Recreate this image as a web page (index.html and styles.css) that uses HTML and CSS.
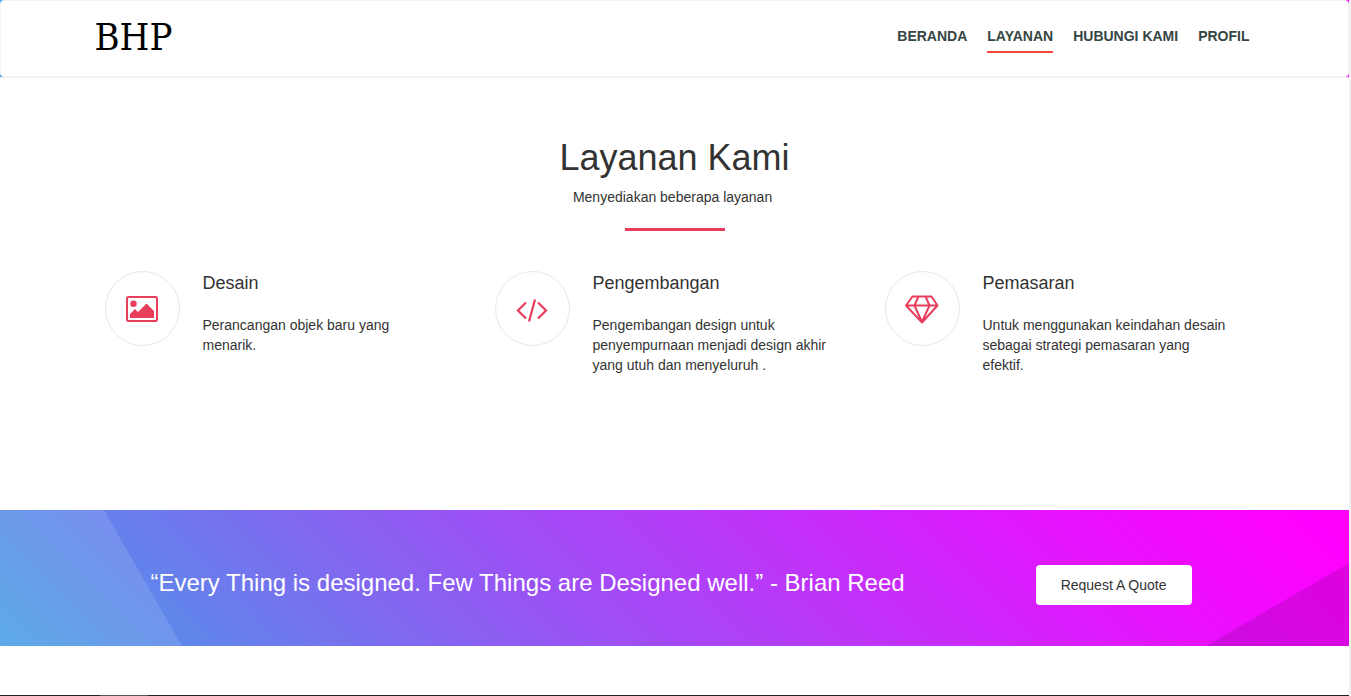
FILE: index.html
```html
<!DOCTYPE html>
<html lang="id">
<head>
<meta charset="utf-8">
<title>BHP - Layanan</title>
<link rel="stylesheet" href="styles.css">
</head>
<body>
<div class="header-wrap">
  <header class="header">
    <div class="container header-row">
      <a class="logo" href="#">BHP</a>
      <nav class="nav">
        <a href="#">BERANDA</a>
        <a class="active" href="#">LAYANAN</a>
        <a href="#">HUBUNGI KAMI</a>
        <a href="#">PROFIL</a>
      </nav>
    </div>
  </header>
</div>
<main>
  <section class="services">
    <div class="section-title">
      <h1>Layanan Kami</h1>
      <p>Menyediakan beberapa layanan&nbsp;</p>
      <hr>
    </div>
    <div class="container service-grid">
      <article class="service">
        <span class="circle">
          <svg width="34" height="28" viewBox="0 0 34 28" aria-hidden="true"><rect x="2" y="2" width="30" height="24" rx="1.5" fill="none" stroke="currentColor" stroke-width="2"/><circle cx="8.5" cy="8.8" r="3.2" fill="currentColor"/><path fill="currentColor" d="M5 23v-4l5-5 3 3 8.500-8.500 7.500 7.500v7z"/></svg>
        </span>
        <div>
          <h2>Desain</h2>
          <p>Perancangan objek baru yang menarik.</p>
        </div>
      </article>
      <article class="service">
        <span class="circle">
          <svg width="34" height="28" viewBox="0 0 34 28" aria-hidden="true"><path fill="none" stroke="currentColor" stroke-width="2.200" d="M11 7.500 3 15.500l8 8M23 7.500l8 8-8 8M20 4.500l-6 22"/></svg>
        </span>
        <div>
          <h2>Pengembangan</h2>
          <p>Pengembangan design untuk penyempurnaan menjadi design akhir yang utuh dan menyeluruh .</p>
        </div>
      </article>
      <article class="service">
        <span class="circle">
          <svg width="36" height="30" viewBox="0 0 36 30" aria-hidden="true"><path fill="none" stroke="currentColor" stroke-width="2" stroke-linejoin="round" d="M8.500 2.500h19l6 9L18 28.500 2 11.500zM2 11.500h31.500M14.500 2.500l-4 9L18 28l7.500-16.500-4-9"/></svg>
        </span>
        <div>
          <h2>Pemasaran</h2>
          <p>Untuk menggunakan keindahan desain sebagai strategi pemasaran yang efektif.</p>
        </div>
      </article>
    </div>
  </section>
  <section class="quote">
    <svg class="facets" viewBox="0 0 1349 136" preserveAspectRatio="none" aria-hidden="true"><path fill="#fff" fill-opacity=".12" d="M0 0h104l78 136H0z"/><path fill-opacity=".12" d="M1349 53v83h-143z"/></svg>
    <div class="container quote-row">
      <p>“Every Thing is designed. Few Things are Designed well.” - Brian Reed</p>
      <button type="button">Request A Quote</button>
    </div>
  </section>
</main>
<footer class="footer"></footer>
</body>
</html>
```
FILE: styles.css
```css
* { box-sizing: border-box; }
html { background: #f1f1f1; }
body {
  margin: 0 2px 0 0;
  min-height: 100vh;
  display: flex;
  flex-direction: column;
  background: #fff;
  color: #333;
  font: 14px/20px "Liberation Sans", Arial, sans-serif;
}
h1, h2, p { margin: 0; font-weight: 400; }
a { color: inherit; text-decoration: none; }
main { flex: 1; }

.container {
  width: 100%;
  max-width: 1170px;
  margin: 0 auto;
  padding: 0 15px;
}

.header-wrap {
  background: linear-gradient(90deg, #4aa3ea, #f0f);
  border-bottom: 1px solid #eee;
}
.header {
  background: #fff;
  border: 1px solid #f5f5f5;
  border-radius: 4px;
}
.header-row {
  display: flex;
  align-items: center;
  justify-content: space-between;
  min-height: 75px;
  padding: 0 10px 0 5px;
}
.logo {
  font: 38px/48px "DejaVu Serif Condensed", "DejaVu Serif", serif;
  font-stretch: condensed;
  color: #000;
  padding-bottom: 4px;
}
.nav {
  display: flex;
  flex-wrap: wrap;
  gap: 20px;
  padding-bottom: 8px;
  color: #364643;
  font-weight: 700;
}
.nav a {
  padding: 10px 0 5px;
  border-bottom: 2px solid transparent;
}
.nav .active { border-color: #f0493a; }

.services { padding: 60px 0 135px; }
.section-title { text-align: center; }
.section-title h1 {
  font-size: 36px;
  line-height: 40px;
  margin-bottom: 9px;
}
.section-title hr {
  width: 100px;
  height: 3px;
  margin: 21px auto 40px;
  border: 0;
  background: #e83e5c;
}
.service-grid {
  display: grid;
  grid-template-columns: repeat(3, 1fr);
  gap: 30px;
}
.service {
  display: flex;
  align-items: flex-start;
  gap: 23px;
}
.service h2 {
  font-size: 18px;
  line-height: 24px;
  margin-bottom: 20px;
}
.service p { max-width: 244px; }
.circle {
  flex: none;
  display: flex;
  align-items: center;
  justify-content: center;
  width: 75px;
  height: 75px;
  border: 1px solid #e7e7e7;
  border-radius: 50%;
  color: #e83e5c;
}

.quote {
  position: relative;
  color: #fff;
  background: linear-gradient(45deg, #469fe4 0%, #5d88ea 12%, #9a52f4 40%, #ec0eff 83%, #f0f 97%);
}
.facets {
  position: absolute;
  inset: 0;
  width: 100%;
  height: 100%;
}
.quote-row {
  position: relative;
  display: flex;
  align-items: center;
  justify-content: space-between;
  min-height: 136px;
  padding: 14px 68px 0 61px;
}
.quote p {
  font-size: 24px;
  line-height: 28px;
  padding-bottom: 4px;
}
.quote button {
  font: inherit;
  color: #333;
  background: #fff;
  border: 0;
  border-radius: 4px;
  padding: 10px 25px;
}
.footer {
  height: 1px;
  background: linear-gradient(90deg, #222 100px, #555 100px, #555 148px, #222 148px);
}
```
